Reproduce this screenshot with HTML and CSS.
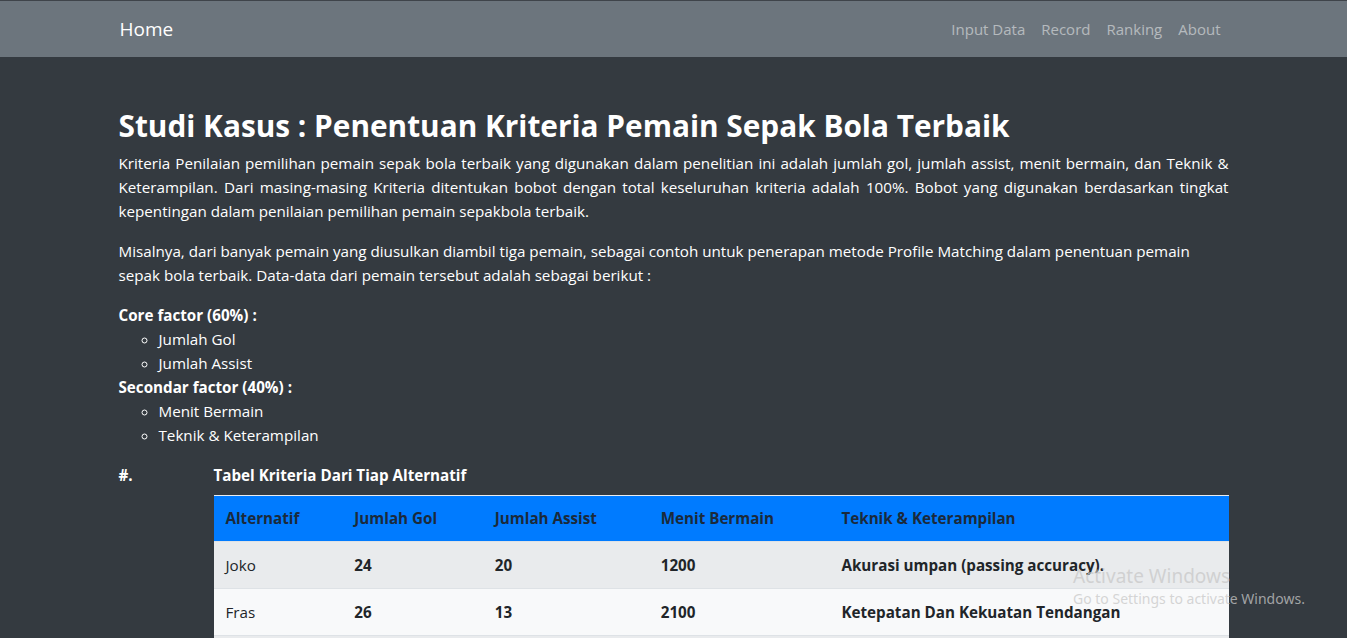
FILE: index.html
```html
<!DOCTYPE html>
<html lang="id">
<head>
<meta charset="utf-8">
<title>Home</title>
<link rel="stylesheet" href="styles.css">
</head>
<body>
<nav class="navbar">
  <div class="container nav-inner">
    <a class="brand" href="#">Home</a>
    <ul class="nav-links">
      <li><a href="#">Input Data</a></li>
      <li><a href="#">Record</a></li>
      <li><a href="#">Ranking</a></li>
      <li><a href="#">About</a></li>
    </ul>
  </div>
</nav>
<main class="container content">
  <h1 class="title">Studi Kasus : Penentuan Kriteria Pemain Sepak Bola Terbaik</h1>
  <p class="justify">Kriteria Penilaian pemilihan pemain sepak bola terbaik yang digunakan dalam penelitian ini adalah jumlah gol, jumlah assist, menit bermain, dan Teknik &amp; Keterampilan. Dari masing-masing Kriteria ditentukan bobot dengan total keseluruhan kriteria adalah 100%. Bobot yang digunakan berdasarkan tingkat kepentingan dalam penilaian pemilihan pemain sepakbola terbaik.</p>
  <p>Misalnya, dari banyak pemain yang diusulkan diambil tiga pemain, sebagai contoh untuk penerapan metode Profile Matching dalam penentuan pemain sepak bola terbaik. Data-data dari pemain tersebut adalah sebagai berikut :</p>
  <div class="factors">
    <b>Core factor (60%) :</b>
    <ul class="circle">
      <li>Jumlah Gol</li>
      <li>Jumlah Assist</li>
    </ul>
    <b>Secondar factor (40%) :</b>
    <ul class="circle">
      <li>Menit Bermain</li>
      <li>Teknik &amp; Keterampilan</li>
    </ul>
  </div>
  <div class="row">
    <div class="col-1"><b>#.</b></div>
    <div class="col-11">
      <b class="caption">Tabel Kriteria Dari Tiap Alternatif</b>
      <table class="table">
        <thead>
          <tr><th>Alternatif</th><th>Jumlah Gol</th><th>Jumlah Assist</th><th>Menit Bermain</th><th>Teknik &amp; Keterampilan</th></tr>
        </thead>
        <tbody>
          <tr class="odd"><td>Joko</td><td><b>24</b></td><td><b>20</b></td><td><b>1200</b></td><td><b>Akurasi umpan (passing accuracy).</b></td></tr>
          <tr class="even"><td>Fras</td><td><b>26</b></td><td><b>13</b></td><td><b>2100</b></td><td><b>Ketepatan Dan Kekuatan Tendangan</b></td></tr>
          <tr class="odd"><td>Andi</td><td><b>18</b></td><td><b>15</b></td><td><b>1800</b></td><td><b>Dribbling</b></td></tr>
        </tbody>
      </table>
    </div>
  </div>
</main>
<div class="watermark">
  <div class="wm-title">Activate Windows</div>
  <div class="wm-sub">Go to Settings to activate Windows.</div>
</div>
</body>
</html>
```

FILE: styles.css
```css
* { box-sizing: border-box; }
html, body { margin: 0; padding: 0; }
body {
  background: #343a40;
  color: #fff;
  font-family: "Open Sans", "Noto Sans", sans-serif;
  font-size: 15.2px;
  line-height: 24px;
  overflow: hidden;
  height: 638px;
}
.container {
  width: 1140px;
  margin: 0 auto;
  padding: 0 15px;
}
.navbar {
  background: #6c757d;
  border-top: 1px solid #3f444a;
  height: 57px;
}
.nav-inner {
  display: flex;
  align-items: center;
  justify-content: space-between;
  height: 56px;
}
.brand {
  color: #fff;
  text-decoration: none;
  font-size: 19px;
  padding-left: 1px;
}
.nav-links {
  list-style: none;
  display: flex;
  margin: 0;
  padding: 0;
}
.nav-links a {
  display: block;
  padding: 0 8px;
  color: rgba(255,255,255,.5);
  text-decoration: none;
  font-size: 15px;
}
.content { padding-top: 51px; }
.title {
  font-size: 29.8px;
  font-weight: 700;
  margin: 0 0 7px;
  line-height: 36px;
}
p { margin: 0 0 16px; }
.justify { text-align: justify; }
.factors { margin-bottom: 16px; }
.factors b { display: block; }
.circle {
  list-style: circle;
  margin: 0;
  padding-left: 40px;
}
.row { display: flex; margin: 0 -15px; }
.col-1 { width: 95px; padding: 0 15px; }
.col-11 { flex: 1; padding: 0 15px; }
.caption { display: block; margin-bottom: 8px; }
.table {
  width: 100%;
  border-collapse: collapse;
  color: #212529;
}
.table th, .table td {
  text-align: left;
  padding: 11px 12px;
  border-top: 1px solid #dee2e6;
}
.table thead th {
  background: #007bff;
  font-weight: 700;
  color: #1b2a3b;
  padding: 10px 12px 11px;
  border-top: 1px solid #e9ecef;
}
.odd { background: #e9ebed; }
.even { background: #f8f9fa; }
.watermark {
  position: absolute;
  left: 1073px;
  top: 563px;
  color: rgba(200,200,200,.75);
  font-family: "Noto Sans", sans-serif;
  pointer-events: none;
}
.wm-title { font-size: 19px; line-height: 26px; }
.wm-sub { font-size: 14px; line-height: 20px; }
```
